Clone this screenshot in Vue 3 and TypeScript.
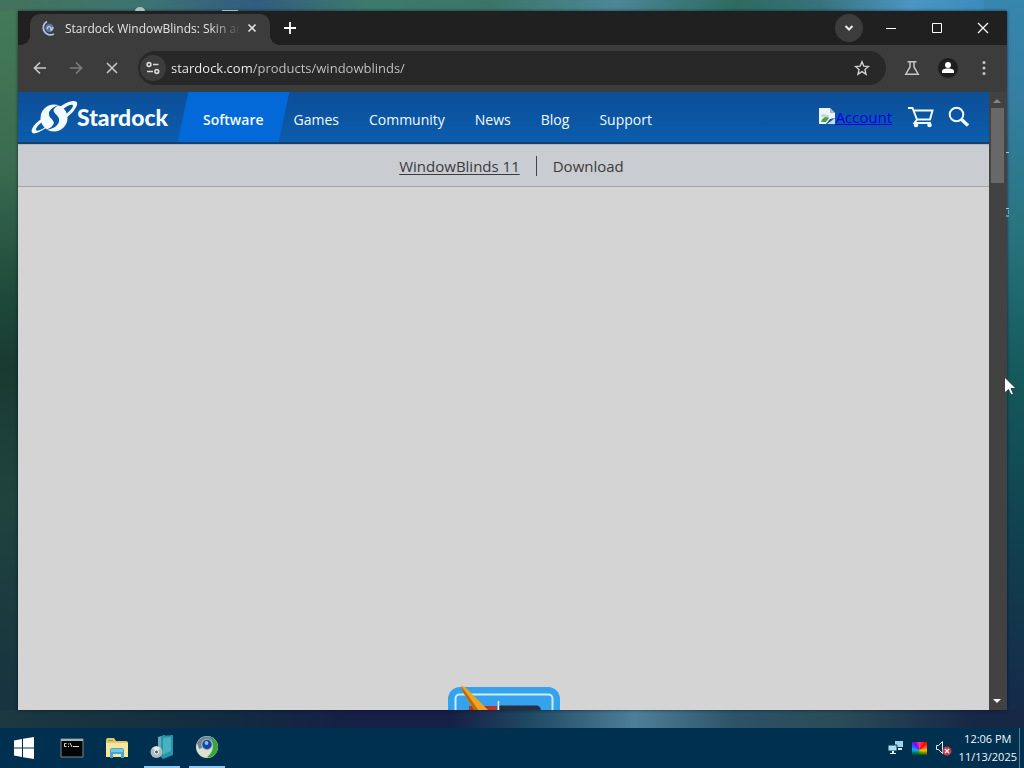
<script setup lang="ts">
import { ref } from 'vue'

const address = ref('stardock.com/products/windowblinds/')
const sections: string[] = ['Software', 'Games', 'Community', 'News', 'Blog', 'Support']
const active = ref('Software')
</script>

<template>
  <div class="desktop">
    <div class="behind" aria-hidden="true">
      <svg width="1024" height="240" viewBox="0 0 1024 240">
        <path d="M135 11a5 4 0 0 1 10 0zM222 10h16v1h-16z" fill="#c4dcd4" opacity=".8" />
        <path d="M1006 152.500h3M1006 208.500h3M1006 216h3" stroke="#a9c9d4" fill="none" />
        <path d="M1008.500 210v4" stroke="#6fa0ba" />
      </svg>
    </div>

    <main class="window">
      <header class="tabstrip">
        <div class="tab">
          <svg class="favicon" width="16" height="16" viewBox="0 0 16 16" fill="none">
            <circle cx="8.500" cy="8" r="4.200" fill="#60779c" />
            <path d="M6 9c1-4 5-2 4 0s2 1 2-2" stroke="#c2d2ec" stroke-width="1.200" />
            <path d="M6 1.500a7 7 0 1 0 7 12.500" stroke="#aebfe6" stroke-width="1.800" />
          </svg>
          <span class="tab-title">Stardock WindowBlinds: Skin an</span>
          <button class="tab-close" aria-label="Close tab">
            <svg width="10" height="10" viewBox="0 0 10 10"><path d="M1.500 1.500l7 7M8.500 1.500l-7 7" stroke="#e3e3e3" stroke-width="1.600" /></svg>
          </button>
        </div>
        <button class="new-tab" aria-label="New tab">
          <svg width="12" height="12" viewBox="0 0 12 12"><path d="M6 0v12M0 6h12" stroke="#fff" stroke-width="1.800" /></svg>
        </button>
        <span class="grow"></span>
        <button class="search-tabs" aria-label="Search tabs">
          <svg width="10" height="8" viewBox="0 0 10 8"><path d="M1.500 2L5 5.500 8.500 2" stroke="#eee" stroke-width="2" fill="none" /></svg>
        </button>
        <button class="caption" aria-label="Minimize">
          <svg width="12" height="12" viewBox="0 0 12 12"><path d="M1 6.500h10" stroke="#fff" /></svg>
        </button>
        <button class="caption" aria-label="Maximize">
          <svg width="12" height="12" viewBox="0 0 12 12"><path d="M1.500 1.500h9v9h-9z" stroke="#fff" fill="none" /></svg>
        </button>
        <button class="caption" aria-label="Close">
          <svg width="12" height="12" viewBox="0 0 12 12"><path d="M1 1l10 10M11 1L1 11" stroke="#fff" stroke-width="1.200" /></svg>
        </button>
      </header>

      <div class="toolbar">
        <button class="tool" aria-label="Back">
          <svg width="16" height="16" viewBox="0 0 16 16" fill="none" stroke="#c7c7c7" stroke-width="1.700"><path d="M14 8H3M8 2.500L2.500 8 8 13.500" /></svg>
        </button>
        <button class="tool" aria-label="Forward">
          <svg width="16" height="16" viewBox="0 0 16 16" fill="none" stroke="#7c7c7c" stroke-width="1.700"><path d="M2 8h11M8 2.500L13.500 8 8 13.500" /></svg>
        </button>
        <button class="tool" aria-label="Stop">
          <svg width="16" height="16" viewBox="0 0 16 16"><path d="M3 3l10 10M13 3L3 13" stroke="#c7c7c7" stroke-width="1.600" /></svg>
        </button>
        <div class="omnibox">
          <button class="site-info" aria-label="Site information">
            <svg width="14" height="14" viewBox="0 0 14 14" fill="none" stroke="#d8d8d8" stroke-width="1.600">
              <circle cx="3" cy="3.500" r="1.900" /><path d="M7 3.500h5.500M1 10.500h6" /><circle cx="10.800" cy="10.500" r="1.900" />
            </svg>
          </button>
          <input v-model="address" class="address" type="text" aria-label="Address" spellcheck="false" />
          <button class="tool" aria-label="Bookmark">
            <svg width="16" height="16" viewBox="0 0 16 16"><path d="M8 1.800l1.800 4.300 4.700.400-3.500 3.100 1 4.600-4-2.500-4 2.500 1-4.600L1.500 6.500l4.700-.400z" fill="none" stroke="#d0d0d0" stroke-width="1.400" /></svg>
          </button>
        </div>
        <button class="tool" aria-label="Labs">
          <svg width="16" height="16" viewBox="0 0 16 16" fill="none" stroke="#c7c7c7" stroke-width="1.500"><path d="M3.500 1.700h9M6 2v5L1.800 14.200h12.400L10 7V2" /></svg>
        </button>
        <button class="profile" aria-label="Profile">
          <svg width="20" height="20" viewBox="0 0 20 20"><circle cx="10" cy="10" r="10" fill="#1d1d1d" /><circle cx="10" cy="7" r="3" fill="#fff" /><path d="M4 15v-2c0-2 4-2.500 6-2.500s6 .500 6 2.500v2z" fill="#fff" /></svg>
        </button>
        <button class="tool" aria-label="Menu">
          <svg width="16" height="16" viewBox="0 0 16 16" fill="#c7c7c7"><circle cx="8" cy="2.500" r="1.500" /><circle cx="8" cy="8" r="1.500" /><circle cx="8" cy="13.500" r="1.500" /></svg>
        </button>
      </div>

      <div class="viewport">
        <div class="page">
          <header class="site-header">
            <a class="brand" href="#" aria-label="Stardock">
              <svg width="142" height="36" viewBox="0 0 142 36">
                <circle cx="23" cy="18" r="13.500" fill="#f2fcff" />
                <path d="M15 28C5 35-1 35 1 29 3 24 9 20 13 17l2 2C9 23 5 27 5 30c1 2 7-1 11-4z" fill="#f2fcff" />
                <path d="M29 7C38 0 48-1 46 5c-2 6-8 11-15 16l-1-3c7-5 11-9 12-12 0-3-6 0-10 3z" fill="#f2fcff" />
                <path d="M35 4C24 5 17 9 18 15c1 4 7 6 4 10-2 3-5 4-8 5 9-1 15-5 14-11-1-5-7-6-5-10 2-3 6-4 12-5z" fill="#0b57a7" />
                <text class="wordmark" x="46" y="26">Stardock</text>
              </svg>
            </a>
            <nav class="site-nav" aria-label="Sections">
              <a v-for="s in sections" :key="s" href="#" :class="{ active: s === active }" @click.prevent="active = s"><span>{{ s }}</span></a>
            </nav>
            <span class="grow"></span>
            <a class="account" href="#">
              <svg width="16" height="16" viewBox="0 0 16 16">
                <path d="M0 0h11l5 5v5l-5 1-4 5H0z" fill="#edf4f8" />
                <path d="M11 0v5h5z" fill="#9fb8c8" /><path d="M2 9c0-3 3-4 4-2 3-1 4 1 4 2z" fill="#b8d5ed" />
                <path d="M2 14c1-5 6-6 8-4l-3 4z" fill="#56a044" /><path d="M16 10v6H8z" fill="#c9d9df" />
              </svg><span>Account</span>
            </a>
            <a class="cart" href="#" aria-label="Cart">
              <svg width="26" height="22" viewBox="0 0 26 22" fill="none" stroke="#eefaff" stroke-width="2">
                <path d="M0 2h4.500l4.500 11.500h13L24.500 4.500H6M9 13.500L6.500 17H23" />
                <circle cx="8" cy="19" r="1.300" fill="#eefaff" /><circle cx="21.500" cy="19" r="1.300" fill="#eefaff" />
              </svg>
            </a>
            <a class="find" href="#" aria-label="Search">
              <svg width="22" height="22" viewBox="0 0 22 22" fill="none" stroke="#eefaff"><circle cx="8.500" cy="8.500" r="6.800" stroke-width="2" /><path d="M13.500 13.500l6.500 6" stroke-width="3.500" /></svg>
            </a>
          </header>
          <nav class="sub-nav" aria-label="Product">
            <a class="current" href="#">WindowBlinds 11</a>
            <a href="#">Download</a>
          </nav>
          <section class="hero">
            <svg width="114" height="24" viewBox="0 0 114 24">
              <path d="M1 25V13A12 12 0 0 1 13 1h88a12 12 0 0 1 12 12v12z" fill="#35a2ed" />
              <path d="M8.500 25V12.500a4 4 0 0 1 4-4h89a4 4 0 0 1 4 4V25" fill="none" stroke="#c9ecff" stroke-width="2" />
              <path d="M22 20h28v5H22z" fill="#c32f2b" /><path d="M52 19.500h38q4 1 4 5.500H52z" fill="#272f44" />
              <path d="M51.500 15v10" stroke="#e3f5ff" stroke-width="1.500" />
              <path d="M14 0l4 1 24 24H28L16 6z" fill="#f0a51c" /><path d="M14 0l2 6 12 19h4L18 5z" fill="#b96a10" />
            </svg>
          </section>
        </div>
        <div class="scrollbar" aria-hidden="true">
          <svg width="15" height="16" viewBox="0 0 15 16"><path d="M4 11l4-4 4 4z" fill="#858585" /></svg>
          <span class="thumb"></span>
          <span class="grow"></span>
          <svg width="15" height="16" viewBox="0 0 15 16"><path d="M4 5h8l-4 4z" fill="#fff" /></svg>
        </div>
      </div>
    </main>

    <footer class="taskbar">
      <button aria-label="Start">
        <svg width="22" height="22" viewBox="0 0 22 22" fill="#fff"><path d="M1 3.500l8-1.500v8.500H1zM10 1.800L21 0v10.500H10zM1 11.500h8V20l-8-1.500zM10 11.500h11V22l-11-1.800z" /></svg>
      </button>
      <button aria-label="Command Prompt">
        <svg width="24" height="20" viewBox="0 0 24 20"><path d="M1 1h22v18H1z" fill="#050505" stroke="#7d868d" /><path d="M1 1h22v2H1z" fill="#a8b1b6" /><path d="M6.500 5.500h-2v3h2M8.500 5.500v1M8.500 8v1M10 5l2 4M13 8.500h6" stroke="#ddd" fill="none" /></svg>
      </button>
      <button aria-label="File Explorer">
        <svg width="24" height="22" viewBox="0 0 24 22"><path d="M1 3q0-2 2-2h6l2 3h10q2 0 2 2v14H1z" fill="#e5c66c" /><path d="M3 3h5v1H3z" fill="#6bb36f" /><path d="M1 6h22v14H1z" fill="#fae69b" /><path d="M5 21v-8q0-2 2-2h10q2 0 2 2v8h-3v-4H8v4z" fill="#45a8ce" /><path d="M6 12h12v3H6z" fill="#70cadf" /></svg>
      </button>
      <button class="running" aria-label="Setup">
        <svg width="24" height="24" viewBox="0 0 24 24"><path d="M8 2l7-2v22l-7-2z" fill="#6aa8b5" /><path d="M11 1l12-1v20l-10 4-2-2z" fill="#2495ab" /><path d="M13 3l8-1v14l-8 4z" fill="#49b0c2" /><circle cx="6.500" cy="17" r="6" fill="#afbcc2" /><path d="M2.500 13l4 4 4-4a6 6 0 0 0-8 0z" fill="#e2e9eb" /><circle cx="6.500" cy="17" r="2" fill="#3b5f76" stroke="#fff" /></svg>
      </button>
      <button class="running" aria-label="Browser">
        <svg width="24" height="24" viewBox="0 0 24 24"><circle cx="12" cy="12" r="11" fill="#dde0cc" /><path d="M2 8A11 11 0 0 1 18 3l-5 8-9 3z" fill="#6e8396" /><path d="M16 2c9 4 9 15 2 19-2 1-4 2-6 1 5-4 7-8 5-14z" fill="#39a53a" /><circle cx="12" cy="9.500" r="5.800" fill="#a6b9cf" /><circle cx="12" cy="9.500" r="4.700" fill="#15489b" /><circle cx="11.500" cy="8" r="1.900" fill="#8fbbed" /></svg>
      </button>
      <span class="grow"></span>
      <div class="tray">
        <button aria-label="Network">
          <svg width="16" height="16" viewBox="0 0 16 16"><path d="M7 1h8v6H7z" fill="#9fd3f2" /><path d="M10 8h4v2h-4z" fill="#d7ecf8" /><path d="M0 5h9v6H0z" fill="#a8dcf8" stroke="#0a3857" /><path d="M4 11h2v2h2v1H2v-1h2z" fill="#e5f5ff" /></svg>
        </button>
        <button class="color-tile" aria-label="Display"></button>
        <button aria-label="Volume muted">
          <svg width="17" height="16" viewBox="0 0 17 16"><path d="M1.500 5.500h2l4-4v12l-4-4h-2z" fill="none" stroke="#e2edf5" /><circle cx="12" cy="11" r="4.500" fill="#c63a49" /><path d="M10 9l4 4M14 9l-4 4" stroke="#fff" stroke-width="1.300" /></svg>
        </button>
      </div>
      <time class="clock"><span>12:06 PM</span><span>11/13/2025</span></time>
      <button class="show-desktop" aria-label="Show desktop"></button>
    </footer>

    <svg class="pointer" width="14" height="22" viewBox="0 0 14 22"><path d="M1.500 1v16l4-3.500L8 19l2.500-1L8 12.500h5z" fill="#fff" stroke="#182c32" stroke-width=".8" /></svg>
  </div>
</template>

<style>
html, body { margin: 0; background: #00304f; }
</style>

<style scoped>
.desktop {
  position: relative;
  display: flex;
  flex-direction: column;
  height: 100vh;
  overflow: hidden;
  font-family: "Open Sans", "Noto Sans", sans-serif;
  background:
    linear-gradient(90deg, #1c3840, #112c40 22%, #161f45 35%, #161f45 44%, #214a63 52%, #4e7f98 62%, #2d5166 72%, #294c58 82%, #172746 95%) bottom 40px left / 100% 18px no-repeat,
    linear-gradient(180deg, #3786ae 0%, #367fa3 12%, #28747f 30%, #155a5c 48%, #104350 68%, #142c4a 90%, #142c4a) right / 40px 100% no-repeat,
    linear-gradient(90deg, #44735c 0%, #3d7472 14%, #315c80 25%, #3c7b6c 36%, #3c7568 48%, #4b8798 60%, #2d6a5f 72%, #38727c 80%, #4b96c2 89%, #3286b8) top / 100% 11px no-repeat,
    linear-gradient(180deg, #447b58 0%, #3a6b50 22%, #1e4a3b 38%, #183a31 48%, #20443d 65%, #173440 90%);
}
button, input { font: inherit; border: 0; padding: 0; margin: 0; background: none; color: inherit; }
button { display: flex; align-items: center; justify-content: center; flex: none; }
svg { display: block; flex: none; }
a { color: inherit; text-decoration: none; }
.grow { flex: 1; }
.behind { position: absolute; left: 0; top: 0; }
.window {
  flex: 1;
  min-height: 0;
  margin: 11px 17px 18px 18px;
  display: flex;
  flex-direction: column;
  background: #3c3c3c;
  box-shadow: 0 0 3px rgba(0, 15, 25, .7);
}
.tabstrip { display: flex; align-items: center; height: 34px; background: #202020; color: #e3e3e3; }
.tab {
  position: relative;
  display: flex;
  align-items: center;
  align-self: flex-end;
  width: 240px;
  height: 31px;
  margin-left: 12px;
  padding-bottom: 3px;
  box-sizing: border-box;
  border-radius: 10px 10px 0 0;
  background: #3c3c3c;
}
.tab::before, .tab::after { content: ""; position: absolute; bottom: 0; width: 10px; height: 10px; }
.tab::before { left: -10px; background: radial-gradient(circle at 0 0, transparent 10px, #3c3c3c 10px); }
.tab::after { right: -10px; background: radial-gradient(circle at 100% 0, transparent 10px, #3c3c3c 10px); }
.favicon { margin-left: 11px; }
.tab-title {
  width: 176px;
  margin-left: 8px;
  white-space: nowrap;
  font-size: 12px;
  -webkit-mask-image: linear-gradient(90deg, #000 145px, transparent 176px);
  mask-image: linear-gradient(90deg, #000 145px, transparent 176px);
}
.tab-close { width: 20px; height: 20px; margin-left: 1px; }
.new-tab { width: 28px; height: 28px; margin-left: 6px; }
.search-tabs { width: 28px; height: 28px; margin-right: 5px; border-radius: 14px; background: #3c3c3c; }
.caption { width: 46px; height: 32px; }
.caption:last-child { margin-right: 1px; }
.toolbar { display: flex; align-items: center; height: 47px; box-sizing: border-box; padding: 0 9px 1px 8px; }
.tool { width: 28px; height: 28px; margin-right: 8px; }
.toolbar > .tool:last-child { margin: 0; }
.omnibox { display: flex; align-items: center; flex: 1; height: 34px; margin: 0 12px 0 4px; border-radius: 17px; background: #282828; }
.site-info { width: 26px; height: 26px; margin-left: 2px; border-radius: 13px; background: #3c3c3c; }
.address {
  flex: 1;
  min-width: 0;
  height: 26px;
  margin-left: 5px;
  font-size: 13px;
  color: transparent;
  background: linear-gradient(90deg, #f4f4f4 82px, #c7c7c7 82px);
  -webkit-background-clip: text;
  background-clip: text;
}
.omnibox .tool { margin-right: 10px; }
.profile { width: 28px; height: 28px; margin-right: 8px; }
.viewport { display: flex; flex: 1; min-height: 0; }
.page { display: flex; flex-direction: column; flex: 1; min-width: 0; background: #d4d4d4; }
.site-header {
  display: flex;
  align-items: center;
  height: 52px;
  box-sizing: border-box;
  border-bottom: 2px solid #173f68;
  background: linear-gradient(#0d4e98, #0b5dad);
  color: #f2fbff;
}
.brand { margin-left: 13px; padding-top: 1px; }
.wordmark { font-family: Lato, sans-serif; font-size: 23px; font-weight: 900; fill: #f2fcff; }
.site-nav { display: flex; align-self: stretch; margin-left: 15px; font-size: 14px; font-weight: 600; }
.site-nav a { position: relative; display: flex; align-items: center; padding: 4px 15px 0; }
.site-nav a:not(.active) { font-weight: 500; }
.site-nav .active::before { content: ""; position: absolute; inset: 0 -5px; background: #0369d8; transform: skewX(-12deg); }
.site-nav span { position: relative; }
.account { display: flex; align-items: center; margin-right: 16px; font-size: 15px; color: #0000ee; text-decoration: underline; }
.account svg { margin-bottom: 3px; }
.cart { margin-right: 14px; }
.find { margin-right: 19px; }
.sub-nav {
  display: flex;
  align-items: center;
  justify-content: center;
  height: 43px;
  box-sizing: border-box;
  padding-left: 16px;
  border-top: 1px solid #b8b5bb;
  border-bottom: 1px solid #a3a6a7;
  background: #c9ccd0;
  color: #3b3b3e;
  font-size: 15px;
}
.sub-nav a { padding: 0 16px; }
.sub-nav a + a { border-left: 1px solid #444; }
.sub-nav .current { text-decoration: underline; text-underline-offset: 2px; }
.hero { display: flex; flex: 1; align-items: flex-end; justify-content: center; }
.scrollbar { display: flex; flex-direction: column; width: 18px; background: #424242; }
.thumb { width: 13px; height: 75px; margin-left: 2px; background: #686868; }
.taskbar { display: flex; align-items: stretch; height: 40px; background: #00304f; color: #f2f7fa; }
.taskbar > button:not(.show-desktop) { width: 36px; margin-right: 9px; }
.taskbar > button:first-child { width: 42px; margin-left: 3px; }
.taskbar > .running { border-bottom: 2px solid #8fc7f3; }
.tray { display: flex; align-items: center; gap: 8px; margin-right: 7px; }
.color-tile {
  width: 15px;
  height: 13px;
  background: linear-gradient(transparent 60%, rgba(0, 0, 0, .7)), conic-gradient(from 0deg at 50% 60%, #ff3a80, #f00 12%, #fd0 28%, #6f0 45%, #00e070 60%, #00b0ff 75%, #70f 90%, #ff3a80);
}
.clock { display: flex; flex-direction: column; align-items: center; justify-content: center; line-height: 18px; font-size: 11px; white-space: nowrap; }
.show-desktop { width: 5px; margin-left: 2px; border-left: 1px solid #557990; }
.pointer { position: absolute; left: 1003px; top: 376px; }
</style>
